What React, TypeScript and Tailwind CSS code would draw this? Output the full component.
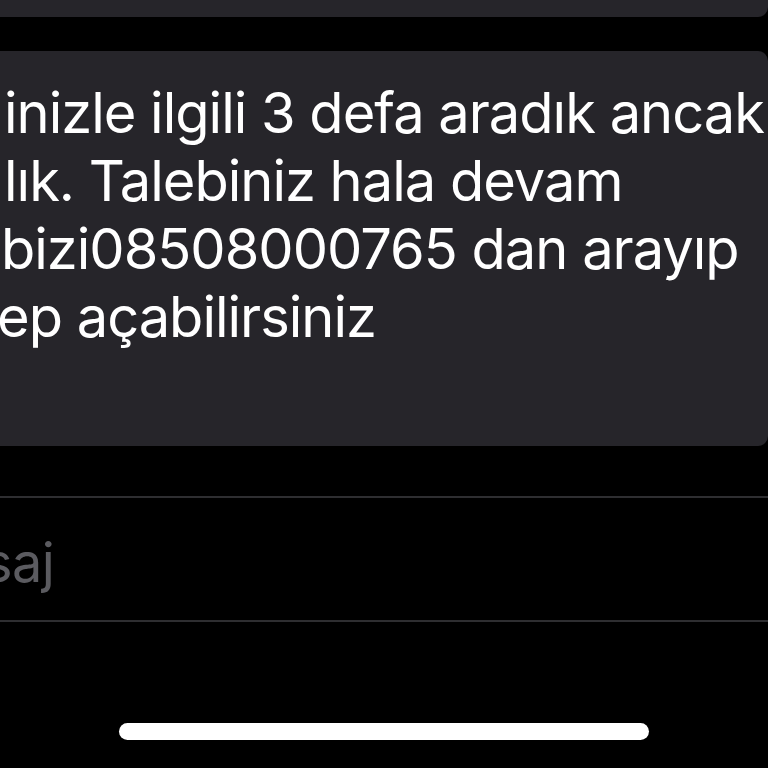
import React from "react";

const lines = [
  { text: "inizle ilgili 3 defa aradık ancak", indent: "pl-[4px]" },
  { text: "lık. Talebiniz hala devam", indent: "pl-[4px]" },
  { text: "bizi08508000765 dan arayıp", indent: "pl-[1px]" },
  { text: "ep açabilirsiniz", indent: "-ml-[3px]" },
];

export default function App() {
  return (
    <div className="w-[768px] h-[768px] bg-black overflow-hidden flex flex-col font-['Inter','Liberation_Sans',sans-serif]">
      {/* previous message bubble, mostly scrolled off */}
      <div className="h-[17px] shrink-0 bg-[#26252a] rounded-br-[10px]" />

      {/* incoming message */}
      <div className="mt-[34px] h-[395px] shrink-0 bg-[#26252a] rounded-r-[10px] pt-[28px] overflow-hidden">
        {lines.map((l) => (
          <div
            key={l.text}
            className={`${l.indent} text-[56px] leading-[68px] text-white whitespace-nowrap tracking-[-1px]`}
          >
            {l.text}
          </div>
        ))}
      </div>

      {/* composer */}
      <div className="mt-[50px] h-[2px] shrink-0 bg-[#2e2e31]" />
      <div className="h-[122px] shrink-0 flex items-center pt-[6px] overflow-hidden">
        <span className="-ml-[16px] text-[54px] text-[#5b5b60] tracking-[-0.5px]">
          saj
        </span>
      </div>
      <div className="h-[2px] shrink-0 bg-[#2e2e31]" />

      {/* home indicator */}
      <div className="flex-1 flex items-start justify-center pt-[101px]">
        <div className="w-[530px] h-[17px] rounded-full bg-white" />
      </div>
    </div>
  );
}
